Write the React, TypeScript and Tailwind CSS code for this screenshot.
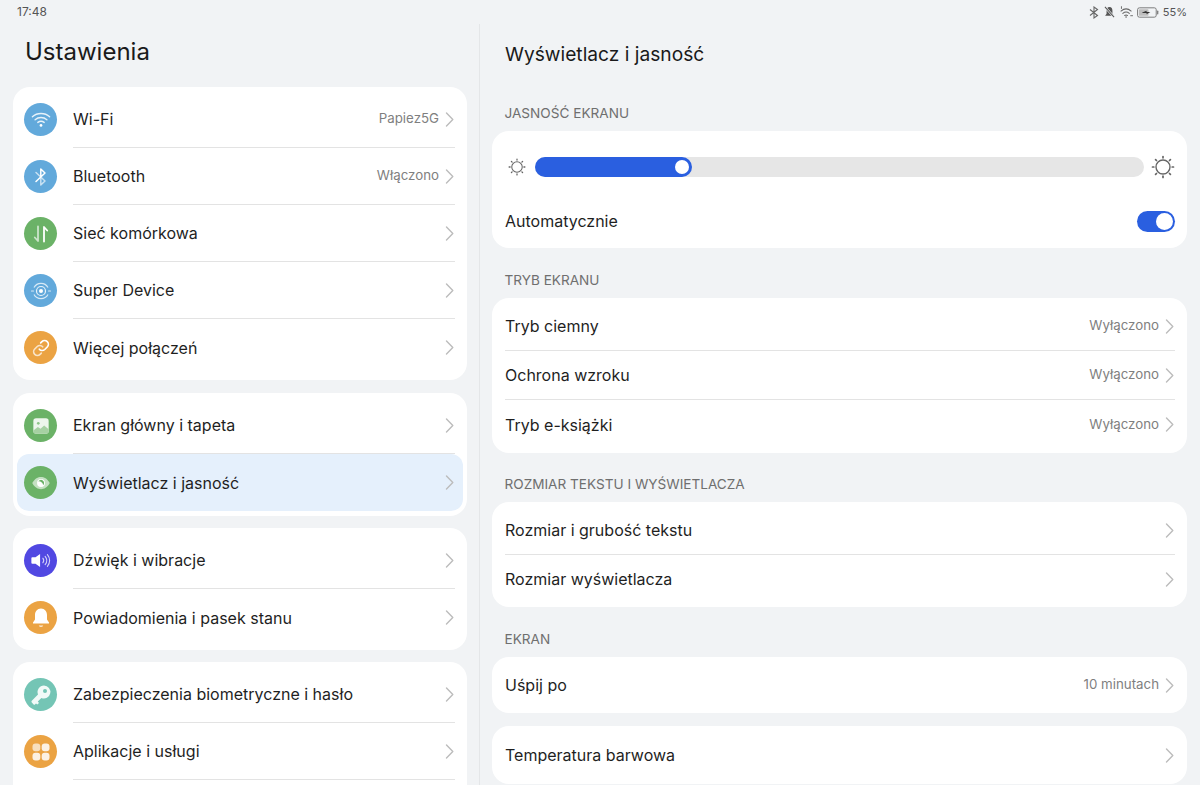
import type { ReactNode } from "react";

const W = "#ffffff";

function WifiGlyph() {
  return (
    <svg width="20" height="17" viewBox="0 0 22 18" fill="none" stroke={W} strokeLinecap="round">
      <path d="M1.500 6C6.800 1.200 15.200 1.200 20.500 6" strokeWidth="1.500" opacity=".85" />
      <path d="M4.500 9.200C8.200 6 13.800 6 17.500 9.200" strokeWidth="1.500" opacity=".85" />
      <path d="M7.500 12.200C9.500 10.700 12.500 10.700 14.500 12.200" strokeWidth="1.500" opacity=".85" />
      <circle cx="11" cy="15.500" r="1.500" fill={W} stroke="none" />
    </svg>
  );
}

function BluetoothGlyph() {
  return (
    <svg width="14" height="20" viewBox="0 0 14 20" fill="none" stroke={W} strokeWidth="1.500" strokeLinejoin="round" strokeLinecap="round">
      <path d="M2 5.500 L11 14 L6.800 18 V10" strokeOpacity=".65" />
      <path d="M6.800 10 V2 L11 6 L2 14.500" />
    </svg>
  );
}

function DataGlyph() {
  return (
    <svg width="16" height="18" viewBox="0 0 16 18" fill="none" strokeLinecap="round" strokeLinejoin="round">
      <path d="M5 1.500V16L1.800 12.500" stroke={W} strokeOpacity=".65" strokeWidth="1.800" />
      <path d="M11 16.500V2L14.200 5.500" stroke={W} strokeWidth="1.800" />
    </svg>
  );
}

function SuperDeviceGlyph() {
  return (
    <svg width="22" height="22" viewBox="0 0 22 22" fill="none" stroke={W}>
      <path d="M4 7.500A8 8 0 0 1 18 7.500M18 14.500A8 8 0 0 1 4 14.500" strokeWidth="1.200" opacity=".75" />
      <path d="M1.500 11H3.500M18.500 11H20.500" strokeWidth="1.200" strokeLinecap="round" opacity=".75" />
      <circle cx="11" cy="11" r="4.500" strokeWidth="1.200" opacity=".85" />
      <circle cx="11" cy="11" r="2" fill={W} stroke="none" />
    </svg>
  );
}

function LinkGlyph() {
  return (
    <svg width="20" height="20" viewBox="0 0 24 24" fill="none" stroke={W} strokeWidth="2" strokeLinecap="round" strokeLinejoin="round">
      <path d="M10 13.500a4.500 4.500 0 0 0 6.500.300l3-3a4.500 4.500 0 0 0-6.400-6.400l-1.500 1.500" />
      <path d="M14 10.500a4.500 4.500 0 0 0-6.500-.300l-3 3a4.500 4.500 0 0 0 6.400 6.400l1.500-1.500" opacity=".7" />
    </svg>
  );
}

function ImageGlyph() {
  return (
    <svg width="18" height="18" viewBox="0 0 20 20">
      <rect x="1.500" y="1.500" width="17" height="17" rx="3" fill={W} opacity=".88" />
      <circle cx="7" cy="7" r="1.500" fill="#8cc487" />
      <path d="M1.500 15 L6.500 11 L9.500 13 L13.500 9.500 L18.500 13.500 V15.500 A3 3 0 0 1 15.500 18.500 H4.500 A3 3 0 0 1 1.500 15.500Z" fill="#a6d1a2" />
    </svg>
  );
}

function EyeGlyph() {
  return (
    <svg width="20" height="14" viewBox="0 0 22 16">
      <path d="M1 8C4 2.500 7.500 1 11 1s7 1.500 10 7c-3 5.500-6.500 7-10 7S4 13.500 1 8Z" fill={W} opacity=".6" />
      <circle cx="11" cy="8" r="4.500" fill={W} />
      <path d="M8.500 5.500A3.600 3.600 0 1 0 14.200 9.800 5 5 0 0 1 8.500 5.500Z" fill="#6bb267" transform="rotate(180 11 8)" />
    </svg>
  );
}

function SpeakerGlyph() {
  return (
    <svg width="22" height="17" viewBox="0 0 24 18" fill="none">
      <path d="M1.500 6.500a1 1 0 0 1 1-1H6L11 2v14l-5-3.500H2.500a1 1 0 0 1-1-1Z" fill={W} />
      <path d="M14 6.500a4 4 0 0 1 0 5M16.500 4.500a7 7 0 0 1 0 9M19 2.500a10 10 0 0 1 0 13" stroke={W} strokeWidth="1.200" strokeLinecap="round" opacity=".75" />
    </svg>
  );
}

function BellGlyph() {
  return (
    <svg width="20" height="22" viewBox="0 0 20 22">
      <path d="M10 1.500c-3.800 0-6 3-6 6.500v4.500L2 15.500v1h16v-1l-2-3V8c0-3.500-2.200-6.500-6-6.500Z" fill={W} />
      <path d="M7.800 18.500h4.400a2.200 1.500 0 0 1-4.400 0Z" fill={W} opacity=".8" />
    </svg>
  );
}

function KeyGlyph() {
  return (
    <svg width="24" height="24" viewBox="0 0 24 24">
      <path d="M15 2.500a6.500 6.500 0 0 0-6 9L2.800 17.700a1.300 1.300 0 0 0 0 1.800l1.600 1.700a1.200 1.200 0 0 0 1.800 0l.8-.8 1.300 1.200 1.700-1.700-1.200-1.300 3.600-3.600a6.500 6.500 0 1 0 2.600-12.500Z" fill={W} opacity=".9" />
      <circle cx="16" cy="8" r="2" fill="#74c5b5" />
    </svg>
  );
}

function AppsGlyph() {
  return (
    <svg width="20" height="20" viewBox="0 0 20 20" fill={W}>
      <rect x="1.500" y="1.500" width="7.800" height="7.800" rx="3" opacity=".65" />
      <rect x="10.700" y="1.500" width="7.800" height="7.800" rx="3" opacity=".85" />
      <rect x="1.500" y="10.700" width="7.800" height="7.800" rx="3" opacity=".85" />
      <rect x="10.700" y="10.700" width="7.800" height="7.800" rx="3" opacity=".85" />
    </svg>
  );
}

function Chevron() {
  return (
    <svg width="9" height="15" viewBox="0 0 9 15" fill="none" stroke="#bcbcbc" strokeWidth="1.400" strokeLinecap="round" strokeLinejoin="round" className="shrink-0">
      <path d="M1.500 1 L7.800 7.500 L1.500 14" />
    </svg>
  );
}

function Sun({ size }: { size: number }) {
  const list = [0, 45, 90, 135, 180, 225, 270, 315];
  return (
    <svg width={size} height={size} viewBox="0 0 24 24" fill="none" stroke="#666" strokeLinecap="round">
      <circle cx="12" cy="12" r="7" strokeWidth="1.400" />
      {list.map((a) => (
        <line key={a} x1="12" y1="1.500" x2="12" y2="2.800" strokeWidth="1.700" transform={`rotate(${a} 12 12)`} />
      ))}
    </svg>
  );
}

function StatusIcons() {
  return (
    <div className="flex items-center gap-[5px]">
      <svg width="10" height="13" viewBox="0 0 10 13" fill="none" stroke="#666" strokeWidth="1.100">
        <path d="M1 3.500 L8.500 9.500 L5 12 V1 L8.500 3.500 L1 9.500" />
      </svg>
      <svg width="11" height="12" viewBox="0 0 12 13">
        <path d="M6 1C3.800 1 2.800 2.800 2.800 5v3.500L1.200 10.500h9.600L9.200 8.500V5C9.200 2.800 8.200 1 6 1Z" fill="#555" />
        <path d="M1 1 L11 12" stroke="#f1f3f5" strokeWidth="2.400" />
        <path d="M1 1 L11 12" stroke="#555" strokeWidth="1.100" />
      </svg>
      <svg width="14" height="12" viewBox="0 0 15 13" fill="none" stroke="#666" strokeWidth="1.100" strokeLinecap="round" className="mr-[-2px]">
        <path d="M1 5.500C4.500 2.500 8.500 2.500 12 5.500M3 8C5.200 6.200 7.800 6.200 10 8M5 10.300C5.900 9.600 7.100 9.600 8 10.300" />
        <circle cx="6.500" cy="11.800" r=".8" fill="#555" stroke="none" />
        <path d="M1.500 .7v2M11.500 10.500h2" strokeWidth="1" />
      </svg>
      <svg width="22" height="11" viewBox="0 0 23 11">
        <rect x=".6" y=".6" width="19.500" height="9.800" rx="2" fill="none" stroke="#777" strokeWidth="1" />
        <rect x="2" y="2" width="10" height="7" rx="1" fill="#bdbdbd" />
        <path d="M5.500 5.500 L10 3.800 V5 H14 L10 7.200 V6 H5.500Z" fill="#333" />
        <rect x="21" y="3.500" width="1.300" height="4" rx=".6" fill="#777" />
      </svg>
      <span className="ml-[-1px] text-[11px] leading-none text-[#555]">55%</span>
    </div>
  );
}

type LeftItem = {
  label: string;
  bg: string;
  icon: ReactNode;
  value?: string;
  active?: boolean;
  noLine?: boolean;
};

function LeftRow({ item }: { item: LeftItem }) {
  const box = item.active
    ? "mx-[4px] rounded-xl bg-[#e5f0fc] pl-[7px] pr-[8px]"
    : "pl-[11px] pr-[12px]";
  return (
    <div className={`flex h-[57px] items-center ${box}`}>
      <div className={`flex h-[33px] w-[33px] shrink-0 items-center justify-center rounded-full ${item.bg}`}>{item.icon}</div>
      <div className={`ml-4 flex h-full min-w-0 flex-1 items-center ${item.noLine ? "" : "border-b border-[#e3e3e3]"}`}>
        <span className="flex-1 text-[16px] text-[#1f1f1f]">{item.label}</span>
        {item.value && <span className="mr-[2px] text-[13.300px] text-[#7f7f7f]">{item.value}</span>}
        <span className="ml-1 mr-[1px]"><Chevron /></span>
      </div>
    </div>
  );
}

const GROUPS: { cls: string; items: LeftItem[] }[] = [
  {
    cls: "mt-0 py-1",
    items: [
      { label: "Wi-Fi", bg: "bg-[#62a9db]", icon: <WifiGlyph />, value: "Papiez5G" },
      { label: "Bluetooth", bg: "bg-[#62a9db]", icon: <BluetoothGlyph />, value: "Włączono" },
      { label: "Sieć komórkowa", bg: "bg-[#6bb267]", icon: <DataGlyph /> },
      { label: "Super Device", bg: "bg-[#62a9db]", icon: <SuperDeviceGlyph /> },
      { label: "Więcej połączeń", bg: "bg-[#eba343]", icon: <LinkGlyph />, noLine: true },
    ],
  },
  {
    cls: "mt-[13px] pt-1 pb-[5px]",
    items: [
      { label: "Ekran główny i tapeta", bg: "bg-[#6bb267]", icon: <ImageGlyph /> },
      { label: "Wyświetlacz i jasność", bg: "bg-[#6bb267]", icon: <EyeGlyph />, active: true, noLine: true },
    ],
  },
  {
    cls: "mt-[12px] py-1",
    items: [
      { label: "Dźwięk i wibracje", bg: "bg-[#5148e2]", icon: <SpeakerGlyph /> },
      { label: "Powiadomienia i pasek stanu", bg: "bg-[#eba343]", icon: <BellGlyph />, noLine: true },
    ],
  },
  {
    cls: "mt-[12px] py-1",
    items: [
      { label: "Zabezpieczenia biometryczne i hasło", bg: "bg-[#74c5b5]", icon: <KeyGlyph /> },
      { label: "Aplikacje i usługi", bg: "bg-[#eba343]", icon: <AppsGlyph /> },
      { label: "", bg: "bg-[#62a9db]", icon: null, noLine: true },
    ],
  },
];

function Header({ children, short }: { children: string; short?: boolean }) {
  return (
    <div className={`flex items-end px-[12.500px] pb-[8px] text-[13.600px] leading-5 text-[#6f6f6f] ${short ? "h-[49px]" : "h-[50px]"}`}>{children}</div>
  );
}

function Row({ label, value, h, line }: { label: string; value?: string; h: string; line?: boolean }) {
  return (
    <div className={`flex items-center ${h} ${line ? "border-b border-[#e3e3e3]" : ""}`}>
      <span className="flex-1 text-[16px] text-[#1f1f1f]">{label}</span>
      {value && <span className="mr-[2px] text-[13.300px] text-[#7f7f7f]">{value}</span>}
      <span className="ml-1 mr-[1px]"><Chevron /></span>
    </div>
  );
}

export default function App() {
  return (
    <div className="h-[785px] w-[1200px] overflow-hidden bg-[#f1f3f5] font-['Inter','Noto_Sans',sans-serif]">
      <div className="flex h-[24px] items-center justify-between pl-[17px] pr-[13px]">
        <span className="text-[12px] text-[#555]">17:48</span>
        <StatusIcons />
      </div>
      <div className="flex h-[761px]">
        <div className="w-[480px] shrink-0 border-r border-[#e4e6e8] pl-[13px] pr-[12px]">
          <div className="flex h-[63px] items-start pl-3 pt-[12px] text-[24px] leading-8 text-[#1a1a1a]">Ustawienia</div>
          {GROUPS.map((g) => (
            <div key={g.items[0].label} className={`rounded-[17px] bg-white ${g.cls}`}>
              {g.items.map((it) => (
                <LeftRow key={it.label} item={it} />
              ))}
            </div>
          ))}
        </div>
        <div className="flex-1 pl-[12px] pr-[13px]">
          <div className="h-[57px] pl-[13px] pt-[16px] text-[19.200px] leading-7 text-[#1a1a1a]">Wyświetlacz i jasność</div>
          <Header>JASNOŚĆ EKRANU</Header>
          <div className="rounded-[17px] bg-white pl-[13px] pr-[12px]">
            <div className="flex items-center pt-[24px]">
              <span className="w-[30px] pl-[3px]"><Sun size={18} /></span>
              <div className="h-[20px] flex-1 rounded-full bg-[#e6e6e6]">
                <div className="flex h-full w-[157px] items-center justify-end rounded-full bg-[#2a5fe0] pr-[3px]">
                  <span className="h-[14px] w-[14px] rounded-full bg-white" />
                </div>
              </div>
              <span className="flex w-[31px] justify-end"><Sun size={24} /></span>
            </div>
            <div className="flex h-[69px] items-center justify-between pt-[15px]">
              <span className="text-[16px] text-[#1f1f1f]">Automatycznie</span>
              <span className="flex h-[21px] w-[38px] items-center justify-end rounded-full bg-[#2a5fe0] pr-[2px]">
                <span className="h-[17px] w-[17px] rounded-full bg-white" />
              </span>
            </div>
          </div>
          <Header>TRYB EKRANU</Header>
          <div className="rounded-[17px] bg-white py-[4px] pl-[13px] pr-[12px]">
            <Row label="Tryb ciemny" value="Wyłączono" h="h-[49px]" line />
            <Row label="Ochrona wzroku" value="Wyłączono" h="h-[49px]" line />
            <Row label="Tryb e-książki" value="Wyłączono" h="h-[49px]" />
          </div>
          <Header short>ROZMIAR TEKSTU I WYŚWIETLACZA</Header>
          <div className="rounded-[17px] bg-white py-[4px] pl-[13px] pr-[12px]">
            <Row label="Rozmiar i grubość tekstu" h="h-[49px]" line />
            <Row label="Rozmiar wyświetlacza" h="h-[48px]" />
          </div>
          <Header>EKRAN</Header>
          <div className="rounded-[17px] bg-white py-[4px] pl-[13px] pr-[12px]">
            <Row label="Uśpij po" value="10 minutach" h="h-[48px]" />
          </div>
          <div className="mt-[13px] rounded-[17px] bg-white py-[4px] pl-[13px] pr-[12px]">
            <Row label="Temperatura barwowa" h="h-[50px]" />
          </div>
        </div>
      </div>
    </div>
  );
}
